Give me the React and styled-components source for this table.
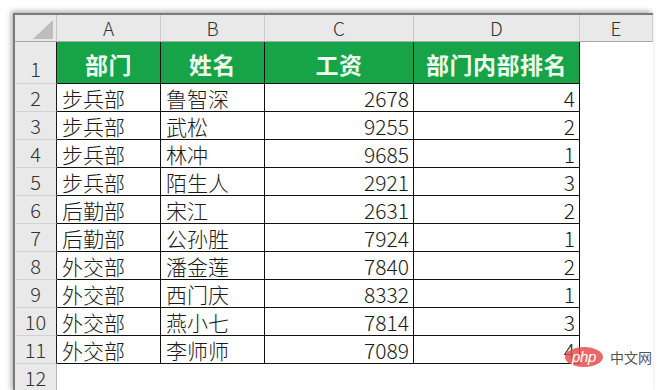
import React from 'react';
import styled, { createGlobalStyle } from 'styled-components';

const Global = createGlobalStyle`
  html, body { margin: 0; padding: 0; background: #fff; overflow: hidden; }
  body { width: 664px; height: 390px; font-family: "Noto Sans CJK SC", "Noto Sans", sans-serif; }
`;

const Page = styled.div`
  position: relative;
  width: 664px;
  height: 390px;
  overflow: hidden;
  padding: 13px 0 0 13px;
  box-sizing: border-box;
  background: #fff;
`;

const Sheet = styled.div`
  width: 640px;
  box-sizing: border-box;
  border-top: 2px solid #7a7a7a;
  border-left: 2px solid #7a7a7a;
  box-shadow: -2px -2px 5px rgba(0, 0, 0, 0.3);
  display: grid;
  grid-template-columns: 42px 104px 104px 149px 166px 73px;
  grid-template-rows: 27px 42px repeat(11, 28px);
`;

const Corner = styled.div`
  background: #e9e9e9;
  border-right: 1px solid #c4c4c4;
  border-bottom: 1px solid #a9a9a9;
  display: flex;
  justify-content: flex-end;
  align-items: flex-end;
  padding: 0 3px 2px 0;
  box-sizing: border-box;
`;

const ColHead = styled.div`
  background: #e9e9e9;
  border-right: 1px solid #cdcdcd;
  border-bottom: 1px solid #a9a9a9;
  box-sizing: border-box;
  display: flex;
  align-items: center;
  justify-content: center;
  font-size: 19px;
  font-weight: 300;
  color: #333;
  line-height: 26px;
`;

const RowHead = styled.div`
  background: #e9e9e9;
  border-right: 1px solid ${p => (p.$inTable ? '#1a1a1a' : '#b5b5b5')};
  border-bottom: 1px solid #d2d2d2;
  box-sizing: border-box;
  display: flex;
  align-items: ${p => (p.$tall ? 'flex-end' : 'center')};
  justify-content: center;
  font-size: 20px;
  font-weight: 300;
  color: #333;
  line-height: 26px;
  padding-bottom: ${p => (p.$tall ? '1px' : '0')};
`;

const HeadCell = styled.div`
  background: #17a348;
  border-right: 1px solid #111;
  border-bottom: 1px solid #111;
  box-sizing: border-box;
  display: flex;
  align-items: center;
  justify-content: center;
  padding-top: 2px;
  font-size: 23px;
  font-weight: 700;
  color: #eefcf0;
  letter-spacing: 0.5px;
`;

const Cell = styled.div`
  border-right: 1px solid #111;
  border-bottom: 1px solid #111;
  box-sizing: border-box;
  display: flex;
  align-items: center;
  justify-content: ${p => (p.$num ? 'flex-end' : 'flex-start')};
  padding: 0 4px 0 5px;
  font-size: 21px;
  font-weight: 300;
  color: #1a1a1a;
  line-height: 28px;
  white-space: nowrap;
  overflow: hidden;
`;

const Blank = styled.div`
  background: #fff;
`;

const Watermark = styled.div`
  position: absolute;
  left: 565px;
  top: 347px;
  display: flex;
  align-items: center;
  gap: 7px;
`;

const Pill = styled.div`
  width: 38px;
  height: 20px;
  border-radius: 50%;
  background: rgba(230, 78, 78, 0.85);
  display: flex;
  align-items: center;
  justify-content: center;
  color: #fff;
  font-family: "Liberation Sans", Arial, sans-serif;
  font-style: italic;
  font-size: 15px;
  line-height: 20px;
  letter-spacing: -0.3px;
`;

const Brand = styled.span`
  font-family: "Noto Sans CJK SC", sans-serif;
  font-size: 14px;
  color: #555;
  line-height: 20px;
`;

const CornerTriangle = () => (
  <svg width="20" height="19" viewBox="0 0 20 19">
    <polygon points="20,0 20,19 0,19" fill="#bdbdbd" />
  </svg>
);

const cols = ['A', 'B', 'C', 'D', 'E'];
const headers = ['部门', '姓名', '工资', '部门内部排名'];
const rows = [
  ['步兵部', '鲁智深', 2678, 4],
  ['步兵部', '武松', 9255, 2],
  ['步兵部', '林冲', 9685, 1],
  ['步兵部', '陌生人', 2921, 3],
  ['后勤部', '宋江', 2631, 2],
  ['后勤部', '公孙胜', 7924, 1],
  ['外交部', '潘金莲', 7840, 2],
  ['外交部', '西门庆', 8332, 1],
  ['外交部', '燕小七', 7814, 3],
  ['外交部', '李师师', 7089, 4],
];

export default function App() {
  return (
    <>
      <Global />
      <Page>
        <Sheet>
          <Corner>
            <CornerTriangle />
          </Corner>
          {cols.map(c => (
            <ColHead key={c}>{c}</ColHead>
          ))}

          <RowHead $inTable $tall>1</RowHead>
          {headers.map(h => (
            <HeadCell key={h}>{h}</HeadCell>
          ))}
          <Blank />

          {rows.map((r, i) => (
            <React.Fragment key={i}>
              <RowHead $inTable>{i + 2}</RowHead>
              <Cell>{r[0]}</Cell>
              <Cell>{r[1]}</Cell>
              <Cell $num>{r[2]}</Cell>
              <Cell $num>{r[3]}</Cell>
              <Blank />
            </React.Fragment>
          ))}

          <RowHead>12</RowHead>
          <Blank />
          <Blank />
          <Blank />
          <Blank />
          <Blank />
        </Sheet>
        <Watermark>
          <Pill>php</Pill>
          <Brand>中文网</Brand>
        </Watermark>
      </Page>
    </>
  );
}
